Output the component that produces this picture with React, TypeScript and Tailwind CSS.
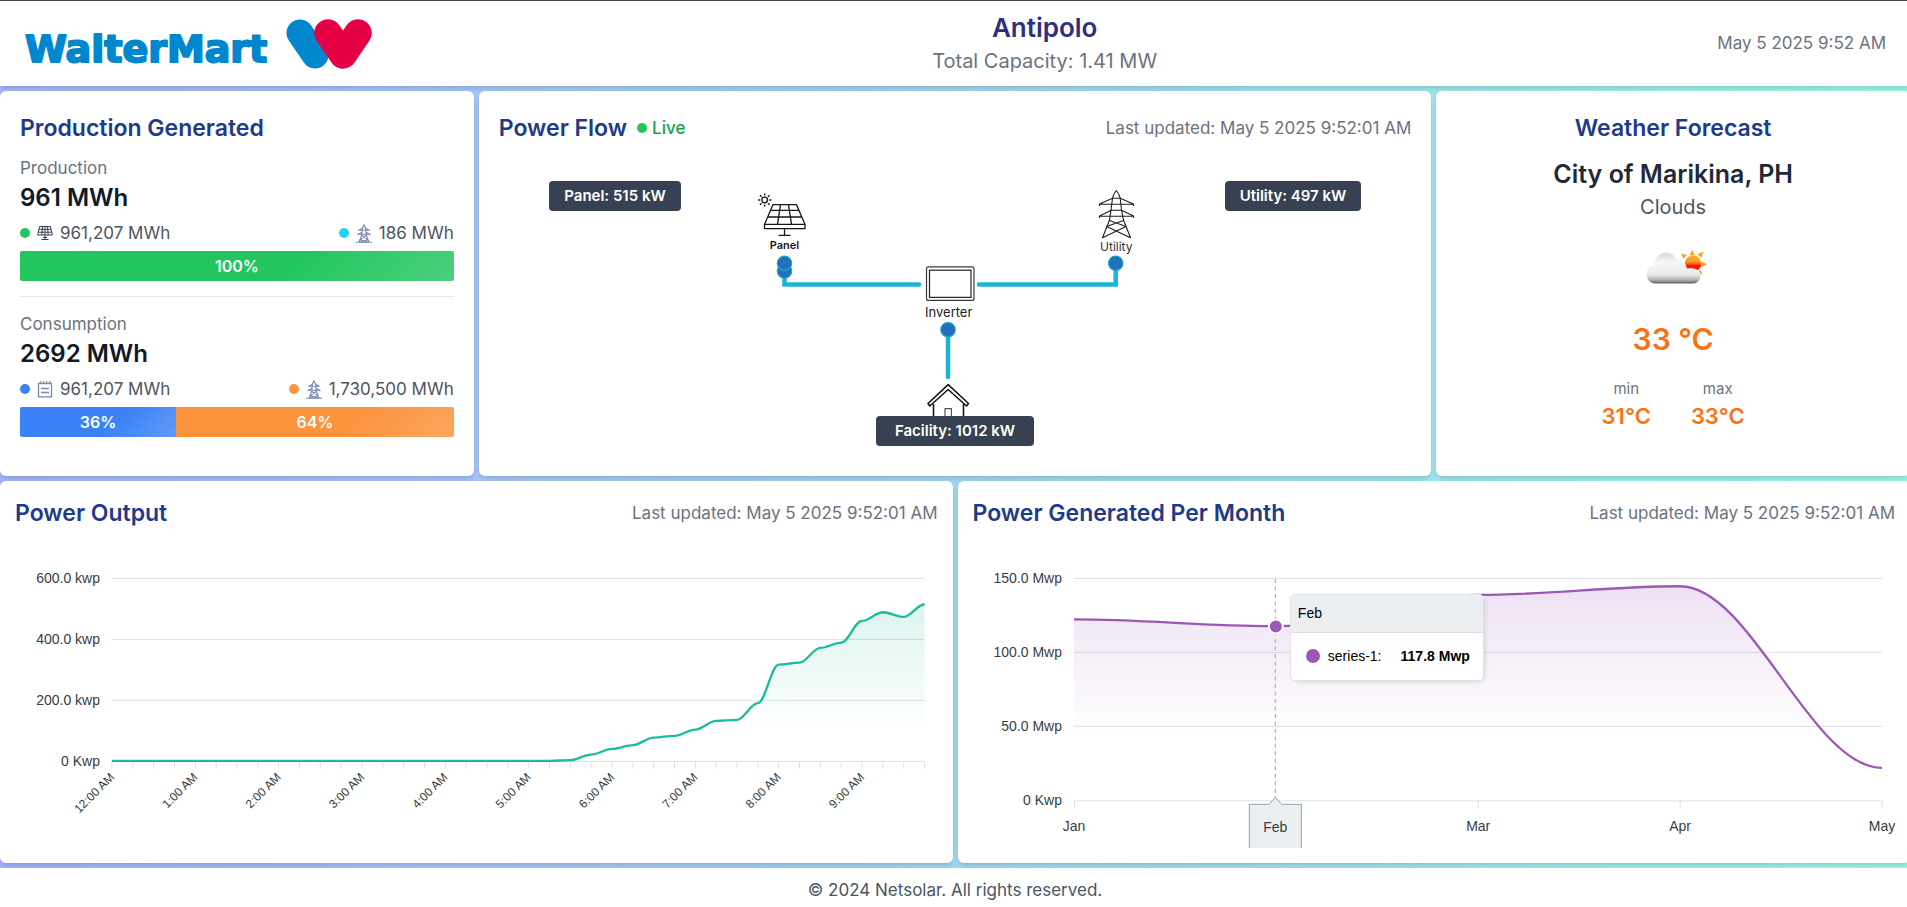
import type { ReactNode } from "react";

const UPDATED = "Last updated: May 5 2025 9:52:01 AM";

type Point = [number, number];

function smoothPath(points: Point[]): string {
  return points
    .map(([x, y], i) => {
      if (i === 0) return `M${x} ${y}`;
      const [px, py] = points[i - 1];
      const d = (x - px) * 0.35;
      return `C${px + d} ${py} ${x - d} ${y} ${x} ${y}`;
    })
    .join(" ");
}

function Logo() {
  return (
    <svg width="348" height="56" viewBox="24 15 348 56" role="img" aria-label="WalterMart logo">
      <text
        x="25"
        y="61.500"
        fontFamily="'DejaVu Sans', sans-serif"
        fontWeight="700"
        fontSize="38"
        fill="#0087cd"
        stroke="#0087cd"
        strokeWidth="2"
        strokeLinejoin="round"
      >
        WalterMart
      </text>
      <path d="M300 33L315 55" stroke="#0087cd" strokeWidth="27" strokeLinecap="round" />
      <path
        d="M328 33L343 55L358 33"
        fill="none"
        stroke="#e60045"
        strokeWidth="27.5"
        strokeLinecap="round"
        strokeLinejoin="round"
      />
    </svg>
  );
}

function SolarIcon() {
  return (
    <svg className="h-4 w-4" viewBox="0 0 16 16" fill="none" stroke="#374151" strokeWidth="1">
      <path d="M2.500 1.500H13.500L15.300 10H.7zM2 4.300H14M1.500 7.200H14.500M5.500 1.500L4.800 10M8 1.500V10M10.500 1.500L11.200 10" />
      <path d="M8 10V14M6 12.500H10M4.500 14.500H11.500" />
    </svg>
  );
}

function TowerIcon() {
  return (
    <svg className="h-[19px] w-4" viewBox="0 0 16 19" fill="none" stroke="#7c88ab" strokeWidth="1.100">
      <path d="M8 .5L6.300 4.500L5.800 11L3 18.300M8 .5L9.700 4.500L10.200 11L13 18.300M0 18.300H16" />
      <path d="M6.300 4.200L2.500 6.300H13.500L9.700 4.200M6 8.200L2 10.300V11.300M10 8.200L14 10.300V11.300M2 10.300H14M5.500 11.300L11.800 15.800M10.500 11.300L4.200 15.800L12.500 18.200M11.800 15.800L3.500 18.200" />
    </svg>
  );
}

function NotepadIcon() {
  return (
    <svg className="h-[18px] w-4" viewBox="0 0 16 18" fill="none" stroke="#7c88ab" strokeWidth="1.300">
      <path d="M1.500 3.500H14.500V16.800H1.500z" />
      <path d="M4 .8L3.300 4M7 .8L6.300 4M10 .8L9.300 4M13 .8L12.300 4" strokeWidth="1.100" />
      <path d="M4 8.500H12M4 12.500H12" strokeWidth="1.600" />
    </svg>
  );
}

function Heading({ children }: { children: ReactNode }) {
  return <h2 className="text-[23px] leading-[34px] font-semibold text-[#1e3a8a]">{children}</h2>;
}

function Updated() {
  return <p className="text-[17px] leading-6 text-[#6b7280]">{UPDATED}</p>;
}

function Amount({ dot, icon, children }: { dot: string; icon: ReactNode; children: ReactNode }) {
  return (
    <div className="flex items-center gap-[7px] text-[17px] leading-6 text-[#4b5563]">
      <span className={`h-[10px] w-[10px] rounded-full ${dot}`} />
      {icon}
      <span>{children}</span>
    </div>
  );
}

function ProductionCard() {
  return (
    <section className="rounded-md bg-white p-5 shadow-md">
      <Heading>Production Generated</Heading>
      <p className="mt-[11px] text-[17px] leading-6 text-[#6b7280]">Production</p>
      <p className="text-2xl leading-9 font-semibold text-[#111827]">961 MWh</p>
      <div className="mt-[5px] flex justify-between">
        <Amount dot="bg-[#22c55e]" icon={<SolarIcon />}>961,207 MWh</Amount>
        <Amount dot="bg-[#22d3ee]" icon={<TowerIcon />}>186 MWh</Amount>
      </div>
      <div className="mt-[6px] flex h-[30px] overflow-hidden rounded-xs text-base font-semibold text-white">
        <div className="flex w-full items-center justify-center bg-[linear-gradient(135deg,#22c55e_60%,#4ad07c)]">100%</div>
      </div>
      <hr className="mt-[15px] border-[#e5e7eb]" />
      <p className="mt-[15px] text-[17px] leading-6 text-[#6b7280]">Consumption</p>
      <p className="text-2xl leading-9 font-semibold text-[#111827]">2692 MWh</p>
      <div className="mt-[5px] flex justify-between">
        <Amount dot="bg-[#3b82f6]" icon={<NotepadIcon />}>961,207 MWh</Amount>
        <Amount dot="bg-[#fb923c]" icon={<TowerIcon />}>1,730,500 MWh</Amount>
      </div>
      <div className="mt-[6px] flex h-[30px] overflow-hidden rounded-xs text-base font-semibold text-white">
        <div className="flex w-[36%] items-center justify-center bg-[linear-gradient(135deg,#3b82f6_60%,#629bf8)]">36%</div>
        <div className="flex w-[64%] items-center justify-center bg-[linear-gradient(135deg,#fb923c_60%,#fca55f)]">64%</div>
      </div>
    </section>
  );
}

function FlowDiagram() {
  return (
    <svg className="mx-auto block" width="430" height="311" viewBox="740 145 430 311" fill="none" fontFamily="Inter, sans-serif">
      <g stroke="#1bb4d6" strokeWidth="4.500" strokeLinecap="round">
        <path d="M784.500 270V284.600H919" />
        <path d="M979 284.600H1115.700V268" />
        <path d="M948 332V377" />
      </g>
      <g fill="#2470bd" stroke="#1aa5cb" strokeWidth="1.200">
        <circle cx="784.500" cy="271" r="7.200" />
        <circle cx="784.500" cy="263.200" r="7.200" />
        <circle cx="1115.700" cy="263.200" r="7.200" />
        <circle cx="948" cy="329.700" r="7.200" />
      </g>
      <g stroke="#161616" strokeWidth="1.300">
        <circle cx="764.700" cy="200" r="2.800" />
        <path d="M764.700 193.500V195.500M764.700 204.500V206.500M758 200H760.200M769.200 200H771.400M760 195.300L761.500 196.800M768 203.300L769.500 204.800M760 204.700L761.500 203.200M768 196.700L769.500 195.200" />
        <path d="M773 204.700H796.500L805 224.300V228.700H764.500V224.300zM764.500 224.300H805M770.500 210.300H799M767.500 217H802M780.500 204.700L777.500 224.300M788.500 204.700L791.500 224.300" />
        <path d="M784.500 229V235.300M778.500 235.400H790.500" />
      </g>
      <g stroke="#3a3a42" strokeWidth="1.200">
        <rect x="926.500" y="266.900" width="47.500" height="33.500" rx="2" />
        <rect x="929.500" y="270.200" width="41.500" height="27.200" stroke="#222" />
      </g>
      <g stroke="#1c1c1c" strokeWidth="1.100" strokeLinejoin="round">
        <path d="M1112.500 198.200Q1114 193 1116.300 190.500Q1118.600 193 1120.200 198.200L1121.500 210L1123.500 220L1130.500 237.800L1106.500 226.500M1112.500 198.200L1111 210L1109.500 220L1102.500 237.800L1126 226.500" />
        <path d="M1112.500 198.200H1120.200M1112.500 198.200L1099.500 204V206M1120.200 198.200L1133.500 204V206M1099.500 204.300H1133.500M1111.200 210.300H1121.500M1111.200 210.300L1099.500 216V218M1121.500 210.300L1133.500 216V218M1099.500 216.200H1133.500" />
        <path d="M1109.500 220.500L1126 226.500M1123.500 220.500L1106.500 226.500" />
      </g>
      <g stroke="#161616" strokeWidth="1.600" strokeLinejoin="round">
        <path d="M948.200 384.600L928 403.500L929.800 406L948.200 389.500L966.500 406L968.500 403.500z" fill="#fff" />
        <path d="M933.500 404V424M963.500 404V424" />
        <path d="M945 420V408.700H951.400V420" strokeWidth="1.200" stroke="#555" />
      </g>
      <g textAnchor="middle" fill="#1a1a1a">
        <text x="784.500" y="249" fontSize="11" fontWeight="600">Panel</text>
        <text x="1116.300" y="251" fontSize="12" fill="#333">Utility</text>
        <text x="948.700" y="317" fontSize="13" fill="#222">Inverter</text>
      </g>
    </svg>
  );
}

const badge =
  "absolute flex h-[30px] -translate-x-1/2 items-center justify-center rounded-[4px] bg-[#374151] text-[15px] font-semibold whitespace-nowrap text-white";

function PowerFlowCard() {
  return (
    <section className="col-span-2 rounded-md bg-white p-5 shadow-md">
      <div className="flex items-center justify-between">
        <div className="flex items-center">
          <Heading>Power Flow</Heading>
          <span className="ml-[10px] h-[10px] w-[10px] rounded-full bg-[#22c55e]" />
          <span className="ml-[5px] text-[17px] leading-6 font-medium text-[#16a34a]">Live</span>
        </div>
        <Updated />
      </div>
      <div className="relative">
        <FlowDiagram />
        <div className={`${badge} top-[36px] left-[calc(50%-340px)] w-[132px]`}>Panel: 515 kW</div>
        <div className={`${badge} top-[36px] left-[calc(50%+338px)] w-[136px]`}>Utility: 497 kW</div>
        <div className={`${badge} top-[271px] left-1/2 w-[158px]`}>Facility: 1012 kW</div>
      </div>
    </section>
  );
}

function WeatherIcon() {
  return (
    <svg width="62" height="36" viewBox="1645 249 62 36">
      <defs>
        <linearGradient id="sun" x1="0" y1="0" x2="0" y2="1">
          <stop offset="0" stopColor="#fbb42c" />
          <stop offset=".4" stopColor="#f79a25" />
          <stop offset=".65" stopColor="#ff1208" />
          <stop offset="1" stopColor="#ff1208" />
        </linearGradient>
        <linearGradient id="cloud" x1="0" y1="0" x2="0" y2="1">
          <stop offset="0" stopColor="#d9d9d9" />
          <stop offset=".3" stopColor="#f6f6f6" />
          <stop offset=".7" stopColor="#ececec" />
          <stop offset=".88" stopColor="#b5b5b5" />
          <stop offset="1" stopColor="#5c5c5c" />
        </linearGradient>
      </defs>
      <path
        fill="#f6a32a"
        d="M1692.200 249.800L1694.800 255.200H1689.600zM1703.500 251.500L1701.300 257.700L1697.500 254.300zM1707 264.200L1701.500 267V261.500zM1702.500 274.500L1696.500 273L1700 269.800zM1681 253.500L1687 255L1683.500 259z"
      />
      <circle cx="1693" cy="263.500" r="8.300" fill="url(#sun)" />
      <path
        fill="url(#cloud)"
        d="M1655 283.500C1650 283.500 1646.500 279 1646.500 274C1646.500 269.500 1649.500 266 1653.500 265.200C1654.500 257.500 1659.500 252.800 1666 252.800C1671 252.800 1675 255.800 1677 260C1681 258.800 1685 260.500 1687 268.500C1695 267.500 1700.500 270 1700.500 275.500C1700.500 280 1697 283.500 1693 283.500z"
      />
    </svg>
  );
}

function WeatherCard() {
  return (
    <section className="flex flex-col items-center rounded-md bg-white p-5 shadow-md">
      <Heading>Weather Forecast</Heading>
      <p className="mt-[11px] text-[25px] leading-9 font-semibold text-[#1f2937]">City of Marikina, PH</p>
      <p className="text-[20px] leading-[30px] text-[#4b5563]">Clouds</p>
      <div className="mt-[27px] mb-[32px] pl-[6px]">
        <WeatherIcon />
      </div>
      <p className="text-[30px] leading-[45px] font-semibold text-[#f97316]">33 °C</p>
      <div className="mt-[16px] flex gap-10 text-center">
        <div>
          <p className="text-[15px] leading-[22px] text-[#6b7280]">min</p>
          <p className="text-[22px] leading-[33px] font-semibold text-[#f97316]">31°C</p>
        </div>
        <div>
          <p className="text-[15px] leading-[22px] text-[#6b7280]">max</p>
          <p className="text-[22px] leading-[33px] font-semibold text-[#f97316]">33°C</p>
        </div>
      </div>
    </section>
  );
}

const outputTail = [
  760.3, 754.7, 749, 745.3, 737.7, 736, 729.7, 721, 720, 703.3, 664.7, 662.7, 648, 642.7, 621, 612.3, 617, 604.3,
];
const outputPoints: Point[] = [...Array<number>(22).fill(761), ...outputTail].map((y, i) => [112 + (i * 813) / 39, y]);
const hours = ["12", "1", "2", "3", "4", "5", "6", "7", "8", "9"];

function OutputChart() {
  const line = smoothPath(outputPoints);
  return (
    <svg className="block h-auto w-full" viewBox="15 530 923 318" fontFamily="'Liberation Sans', Arial, sans-serif" fill="#373d3f">
      <defs>
        <linearGradient id="output" x1="0" y1="0" x2="0" y2="1">
          <stop offset="0" stopColor="#1abc9c" stopOpacity=".16" />
          <stop offset=".8" stopColor="#1abc9c" stopOpacity="0" />
        </linearGradient>
      </defs>
      <path d="M112 578.500H925M112 639.500H925M112 700.500H925M112 761.500H925" stroke="#e0e0e0" />
      {outputPoints.map(([x]) => (
        <path key={x} d={`M${x} 762V768.500`} stroke="#e0e0e0" />
      ))}
      <path d={`${line} V761 H112 Z`} fill="url(#output)" />
      <path d={line} fill="none" stroke="#1abc9c" strokeWidth="2.300" />
      <g fontSize="14" textAnchor="end">
        <text x="100" y="583">600.0 kwp</text>
        <text x="100" y="644">400.0 kwp</text>
        <text x="100" y="705">200.0 kwp</text>
        <text x="100" y="766">0 Kwp</text>
      </g>
      <g fontSize="12" textAnchor="end">
        {hours.map((h, i) => {
          const x = 115 + (i * 4 * 813) / 39;
          return (
            <text key={h} x={x} y="778" transform={`rotate(-45 ${x} 778)`}>
              {h}:00 AM
            </text>
          );
        })}
      </g>
    </svg>
  );
}

const monthPoints: Point[] = [
  [1074, 619.5],
  [1276, 626.3],
  [1478.5, 595],
  [1680.5, 586.3],
  [1882.5, 768],
];

function MonthChart() {
  const line = smoothPath(monthPoints);
  return (
    <div className="relative">
      <svg className="block h-auto w-full" viewBox="973 530 923 318" fontFamily="'Liberation Sans', Arial, sans-serif" fill="#373d3f">
        <defs>
          <linearGradient id="month" x1="0" y1="0" x2="0" y2="1">
            <stop offset="0" stopColor="#9b59b6" stopOpacity=".18" />
            <stop offset=".7" stopColor="#9b59b6" stopOpacity="0" />
          </linearGradient>
        </defs>
        <path
          d="M1074 578.500H1883M1074 652.500H1883M1074 726.500H1883M1074 801H1883M1074.500 801V808.500M1478.500 801V808.500M1680.500 801V808.500M1882.500 801V808.500"
          stroke="#e0e0e0"
        />
        <path d={`${line} V801 H1074 Z`} fill="url(#month)" />
        <path d={line} fill="none" stroke="#9b59b6" strokeWidth="2.300" />
        <path d="M1275.500 579V798" stroke="#b6b6b6" strokeWidth="1.300" strokeDasharray="4 3.500" />
        <circle cx="1276" cy="626.500" r="7" fill="#9b59b6" stroke="#fff" strokeWidth="2" />
        <path d="M1249.500 850V804.500H1269L1275.500 797.500L1282 804.500H1301.500V850" fill="#eceff1" stroke="#90a4ae" />
        <g fontSize="14" textAnchor="end">
          <text x="1062" y="583">150.0 Mwp</text>
          <text x="1062" y="657">100.0 Mwp</text>
          <text x="1062" y="731">50.0 Mwp</text>
          <text x="1062" y="805">0 Kwp</text>
        </g>
        <g fontSize="14" textAnchor="middle">
          <text x="1074" y="831">Jan</text>
          <text x="1275.500" y="832">Feb</text>
          <text x="1478.500" y="831">Mar</text>
          <text x="1680.500" y="831">Apr</text>
          <text x="1882.500" y="831">May</text>
        </g>
      </svg>
      <div className="absolute top-[20%] left-[34.4%] w-[194px] overflow-hidden rounded-[5px] border border-[#e3e3e3] bg-white/95 font-['Liberation_Sans',Arial,sans-serif] text-sm text-black shadow-[2px_2px_6px_-4px_#999]">
        <div className="border-b border-[#dddddd] bg-[#eceff1] px-[7px] py-2 leading-[21px]">Feb</div>
        <div className="flex h-[47px] items-center pr-[13px] pl-[15px]">
          <span className="h-[14px] w-[14px] rounded-full bg-[#9b59b6]" />
          <span className="ml-2">series-1:</span>
          <span className="ml-auto font-bold whitespace-nowrap">117.8 Mwp</span>
        </div>
      </div>
    </div>
  );
}

export default function App() {
  return (
    <div className="flex min-h-screen flex-col overflow-hidden bg-linear-to-r from-[#a5b4fc] to-[#99f6e4] font-['Inter',sans-serif]">
      <div className="flex w-[calc(100%+3px)] grow flex-col gap-[5px]">
        <header className="flex items-center justify-between border-t border-[#444444] bg-white px-6 pt-[9px] pb-[10px] shadow-md">
          <Logo />
          <div className="text-center">
            <h1 className="text-[26px] leading-9 font-semibold text-[#312e81]">Antipolo</h1>
            <p className="text-[20px] leading-[30px] text-[#6b7280]">Total Capacity: 1.41 MW</p>
          </div>
          <p className="text-[17px] leading-6 text-[#6b7280]">May 5 2025 9:52 AM</p>
        </header>
        <main className="flex grow flex-col gap-[5px]">
          <div className="grid grid-cols-4 gap-[5px]">
            <ProductionCard />
            <PowerFlowCard />
            <WeatherCard />
          </div>
          <div className="grid grow grid-cols-2 gap-[5px]">
            <section className="rounded-md bg-white p-[15px] shadow-md">
              <div className="flex items-center justify-between">
                <Heading>Power Output</Heading>
                <Updated />
              </div>
              <OutputChart />
            </section>
            <section className="rounded-md bg-white p-[15px] shadow-md">
              <div className="flex items-center justify-between">
                <Heading>Power Generated Per Month</Heading>
                <Updated />
              </div>
              <MonthChart />
            </section>
          </div>
        </main>
        <footer className="bg-white pt-[10px] pb-[5px] text-center text-[17px] leading-6 text-[#4b5563]">
          © 2024 Netsolar. All rights reserved.
        </footer>
      </div>
    </div>
  );
}
